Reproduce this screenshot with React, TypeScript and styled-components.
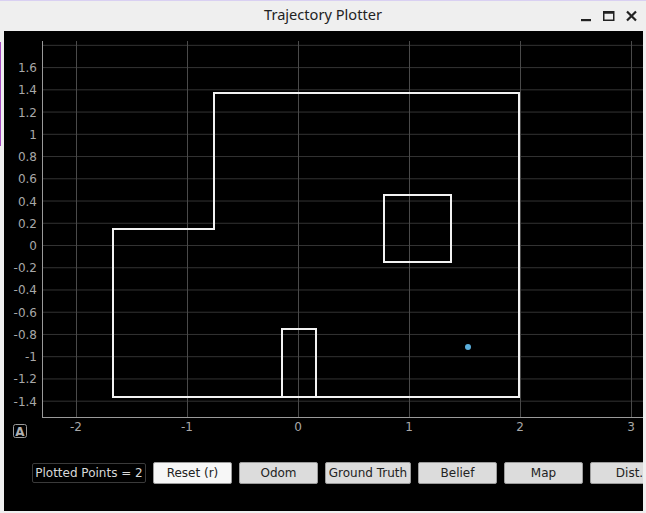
import React from "react";
import styled, { createGlobalStyle } from "styled-components";

const Global = createGlobalStyle`
  html, body { margin: 0; padding: 0; background: #efefef; overflow: hidden; }
  #root { width: 646px; height: 513px; }
`;

const Window = styled.div`
  width: 646px;
  height: 513px;
  display: flex;
  flex-direction: column;
  background: #efefef;
  border-top: 1px solid #d9d0f2;
  box-sizing: border-box;
  font-family: "DejaVu Sans", sans-serif;
`;

const TitleBar = styled.div`
  height: 30px;
  flex: none;
  position: relative;
  display: flex;
  align-items: center;
  justify-content: center;
`;

const Title = styled.span`
  font-family: "Noto Sans", "DejaVu Sans", sans-serif;
  font-size: 14.6px;
  color: #222;
  margin-top: -4px;
`;

const Controls = styled.div`
  position: absolute;
  right: 9px;
  top: 9px;
  display: flex;
  gap: 11px;
  align-items: center;
`;

const Frame = styled.div`
  flex: 1;
  display: flex;
  padding: 0 3px 2px 4px;
  position: relative;
`;

const SideMark = styled.div`
  position: absolute;
  left: 0;
  top: 11px;
  width: 1px;
  height: 104px;
  background: #a64dbf;
`;

const Canvas = styled.div`
  flex: 1;
  background: #000;
  display: flex;
  flex-direction: column;
  overflow: hidden;
`;

const Plot = styled.svg`
  display: block;
  flex: none;
`;

const ButtonRow = styled.div`
  display: flex;
  gap: 7px;
  padding: 16px 0 0 28px;
  white-space: nowrap;
`;

const Counter = styled.div`
  height: 20px;
  width: 114px;
  flex: none;
  box-sizing: border-box;
  border: 1px solid #3a3a3a;
  border-radius: 2px;
  color: #d8d8d8;
  font-size: 12px;
  display: flex;
  align-items: center;
  justify-content: center;
  margin-top: 1px;
`;

const Btn = styled.button<{ $primary?: boolean; $w?: number }>`
  height: 22px;
  width: ${(p) => p.$w ?? 79}px;
  flex: none;
  box-sizing: border-box;
  padding: 0;
  border: 1px solid #9c9c9c;
  border-radius: 2px;
  background: ${(p) => (p.$primary ? "#f7f7f7" : "#dcdcdc")};
  color: #222;
  font-family: "DejaVu Sans", sans-serif;
  font-size: 12px;
`;

const X0 = 298;
const Y0 = 245;
const SX = 111;
const SY = 111.2;
const px = (x: number) => X0 + x * SX;
const py = (y: number) => Y0 - y * SY;

const hTicks: number[] = [];
for (let i = -7; i <= 9; i++) hTicks.push(i * 0.2);
const xTicks = [-2, -1, 0, 1, 2, 3];

const fmt = (v: number) => {
  const r = Math.round(v * 10) / 10;
  return r === 0 ? "0" : String(r);
};

const outer = [
  [113, 229],
  [214, 229],
  [214, 93],
  [519, 93],
  [519, 397],
  [113, 397],
];

export default function App() {
  return (
    <>
      <Global />
      <Window>
        <TitleBar>
          <Title>Trajectory Plotter</Title>
          <Controls>
            <svg width="11" height="12" viewBox="0 0 11 12">
              <rect x="0" y="9" width="10" height="2.2" fill="#222" />
            </svg>
            <svg width="12" height="12" viewBox="0 0 12 12">
              <rect x="0.75" y="1.75" width="10" height="8.5" fill="none" stroke="#222" strokeWidth="1.5" />
              <rect x="0.75" y="1.75" width="10" height="2" fill="#222" />
            </svg>
            <svg width="11" height="12" viewBox="0 0 11 12">
              <path d="M1 1.5 L10 10.5 M10 1.5 L1 10.5" stroke="#222" strokeWidth="2.2" />
            </svg>
          </Controls>
        </TitleBar>
        <Frame>
          <SideMark />
          <Canvas>
            <Plot width={639} height={415} viewBox="4 31 639 415">
              {hTicks.map((v) => (
                <line key={"h" + v} x1={42} x2={643} y1={py(v) + 0.5} y2={py(v) + 0.5} stroke="#333" strokeWidth={1} />
              ))}
              {xTicks.map((v) => (
                <line key={"v" + v} x1={px(v) + 0.5} x2={px(v) + 0.5} y1={41} y2={417} stroke="#4a4a4a" strokeWidth={1} />
              ))}
              <line x1={42.5} x2={42.5} y1={41} y2={417} stroke="#9a9a9a" strokeWidth={1} />
              <line x1={42} x2={643} y1={417.5} y2={417.5} stroke="#9a9a9a" strokeWidth={1} />
              {hTicks
                .filter((v) => v < 1.7)
                .map((v) => (
                  <text
                    key={"t" + v}
                    x={37}
                    y={py(v) + 5}
                    textAnchor="end"
                    fill="#a8a8a8"
                    fontSize="12"
                    fontFamily="DejaVu Sans, sans-serif"
                  >
                    {fmt(v)}
                  </text>
                ))}
              {xTicks.map((v) => (
                <text
                  key={"xt" + v}
                  x={px(v)}
                  y={431}
                  textAnchor="middle"
                  fill="#a8a8a8"
                  fontSize="12"
                  fontFamily="DejaVu Sans, sans-serif"
                >
                  {v}
                </text>
              ))}
              <polygon
                points={outer.map((p) => p.join(",")).join(" ")}
                fill="none"
                stroke="#f2f2f2"
                strokeWidth={2}
              />
              <rect x={384} y={195} width={67} height={67} fill="none" stroke="#f2f2f2" strokeWidth={2} />
              <rect x={282} y={329} width={34} height={68} fill="none" stroke="#f2f2f2" strokeWidth={2} />
              <circle cx={468} cy={347} r={3} fill="#5aaedb" />
              <rect x={13.5} y={424.5} width={13} height={13} rx={2} fill="none" stroke="#9a9a9a" strokeWidth={1} />
              <text
                x={20}
                y={435.5}
                textAnchor="middle"
                fill="#b0b0b0"
                fontSize="12"
                fontWeight="bold"
                fontFamily="DejaVu Sans, sans-serif"
              >
                A
              </text>
            </Plot>
            <ButtonRow>
              <Counter>Plotted Points = 2</Counter>
              <Btn $primary>Reset (r)</Btn>
              <Btn>Odom</Btn>
              <Btn $w={86}>Ground Truth</Btn>
              <Btn>Belief</Btn>
              <Btn>Map</Btn>
              <Btn>Dist.</Btn>
            </ButtonRow>
          </Canvas>
        </Frame>
      </Window>
    </>
  );
}
